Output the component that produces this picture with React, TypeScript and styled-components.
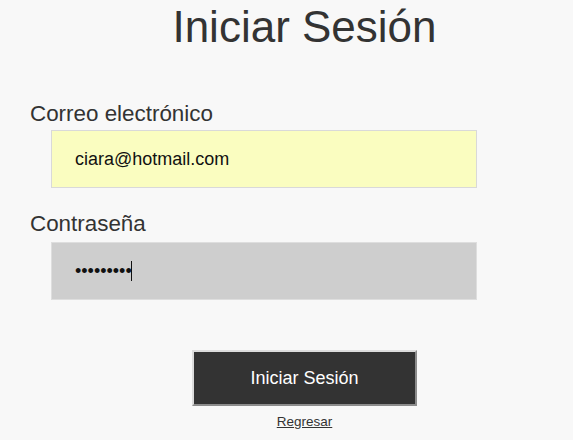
import React from "react";
import styled, { createGlobalStyle } from "styled-components";

const GlobalStyle = createGlobalStyle`
  html, body {
    margin: 0;
    padding: 0;
    background: #f8f8f8;
    font-family: "Liberation Sans", Arial, sans-serif;
    color: #333333;
  }
`;

const Page = styled.main`
  display: flex;
  flex-direction: column;
  width: 100%;
`;

const Title = styled.h1`
  margin: 0;
  padding: 2px 0 0 36px;
  text-align: center;
  font-size: 44px;
  line-height: 50px;
  font-weight: 400;
  color: #333333;
`;

const Form = styled.form`
  display: flex;
  flex-direction: column;
  padding-left: 30px;
  margin: 0;
`;

const Label = styled.label<{ $top: number; $gap: number }>`
  display: block;
  margin-top: ${(p) => p.$top}px;
  margin-bottom: ${(p) => p.$gap}px;
  font-size: 22.4px;
  line-height: 26px;
  color: #333333;
`;

const Field = styled.div`
  position: relative;
  margin-left: 21px;
  width: 426px;
  height: 58px;
`;

const Input = styled.input<{ $bg: string; $border: string }>`
  box-sizing: border-box;
  display: block;
  margin: 0;
  width: 100%;
  height: 100%;
  padding: 0 0 0 23px;
  border: 1px solid ${(p) => p.$border};
  border-radius: 0;
  background: ${(p) => p.$bg};
  font-family: "Liberation Sans", Arial, sans-serif;
  font-size: 18px;
  color: #111111;
  caret-color: transparent;
  outline: none;
`;

const Caret = styled.span`
  position: absolute;
  left: 80px;
  top: 19px;
  width: 1px;
  height: 20px;
  background: #111111;
  pointer-events: none;
`;

const Actions = styled.div`
  display: flex;
  flex-direction: column;
  align-items: center;
  padding-left: 36px;
  margin-top: 50px;
`;

const SubmitButton = styled.button`
  box-sizing: border-box;
  width: 225px;
  height: 56px;
  margin: 0;
  padding: 0;
  background: #333333;
  color: #ffffff;
  font-family: "Liberation Sans", Arial, sans-serif;
  font-size: 18px;
  border-style: solid;
  border-width: 2px;
  border-color: #dcdcdc #8c8c8c #8c8c8c #dcdcdc;
  cursor: pointer;
`;

const BackLink = styled.a`
  margin-top: 8px;
  font-size: 13.5px;
  line-height: 16px;
  color: #333333;
  text-decoration: underline;
`;

export default function App() {
  return (
    <>
      <GlobalStyle />
      <Page>
        <Title>Iniciar Sesión</Title>
        <Form onSubmit={(e) => e.preventDefault()}>
          <Label htmlFor="email" $top={49} $gap={3}>
            Correo electrónico
          </Label>
          <Field>
            <Input
              id="email"
              type="email"
              defaultValue="ciara@hotmail.com"
              $bg="#fafdc0"
              $border="#d9d9d9"
            />
          </Field>
          <Label htmlFor="password" $top={23} $gap={5}>
            Contraseña
          </Label>
          <Field>
            <Input
              id="password"
              type="password"
              defaultValue="123456789"
              $bg="#cecece"
              $border="#dedede"
            />
            <Caret />
          </Field>
        </Form>
        <Actions>
          <SubmitButton type="button">Iniciar Sesión</SubmitButton>
          <BackLink href="#">Regresar</BackLink>
        </Actions>
      </Page>
    </>
  );
}
